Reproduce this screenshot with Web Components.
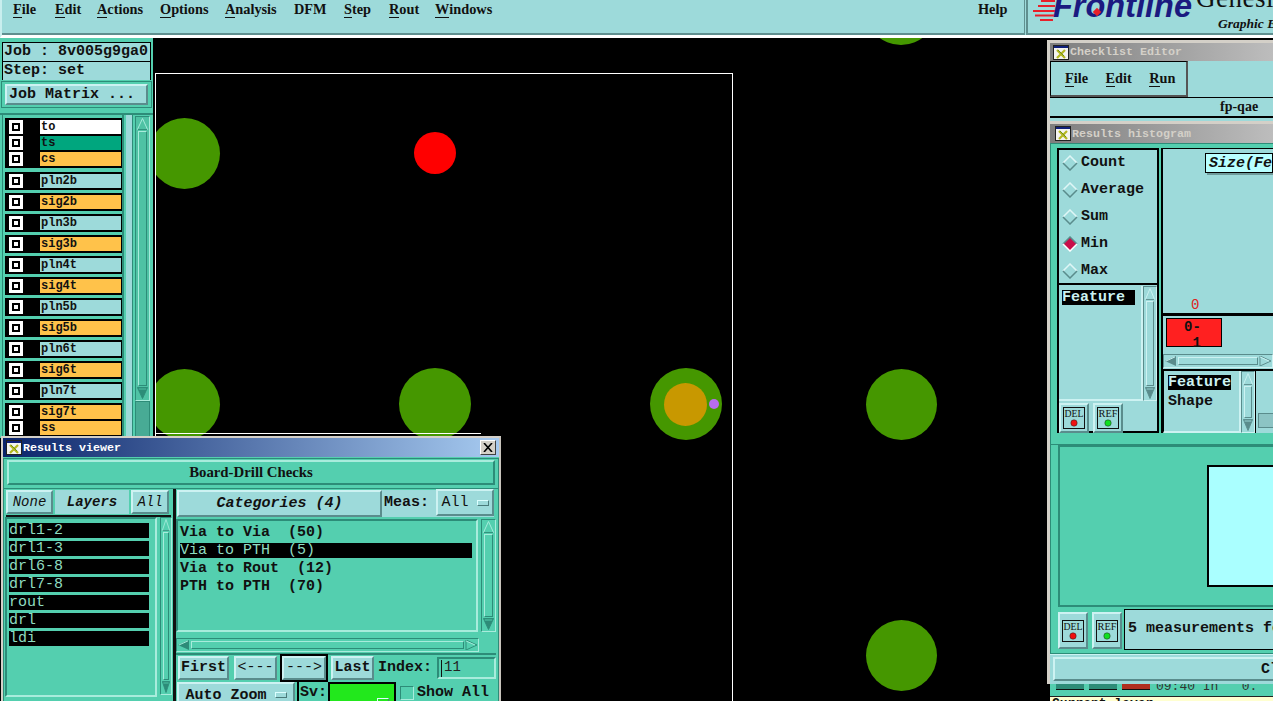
<!DOCTYPE html>
<html><head><meta charset="utf-8"><title>Genesis</title>
<style>
html,body{margin:0;padding:0;background:#000;overflow:hidden;width:1273px;height:701px}
</style></head>
<body>
<genesis-desktop>
  <app-header slot="header"></app-header>
  <left-panel slot="left"></left-panel>
  <pcb-canvas slot="canvas"></pcb-canvas>
  <results-viewer slot="win"></results-viewer>
  <checklist-editor slot="win"></checklist-editor>
  <results-histogram slot="win"></results-histogram>
  <status-strip slot="win"></status-strip>
</genesis-desktop>
<script>
const BASE=`*,:host{box-sizing:border-box}`;
const MONO=`"Liberation Mono","DejaVu Sans Mono",monospace`;
const SERIF=`"Liberation Serif",serif`;
const def=(tag,css,html)=>customElements.define(tag,class extends HTMLElement{
  connectedCallback(){
    if(this.shadowRoot)return;
    const r=this.attachShadow({mode:'open'});
    const a=n=>this.getAttribute(n)||'';
    r.innerHTML=`<style>${BASE}${css}</style>`+(typeof html==='function'?html(a,this):html);
  }
});

def('genesis-desktop',`
:host{display:flex;flex-direction:column;position:relative;width:1273px;height:701px;background:#000;overflow:hidden}
.main{flex:1;display:flex;min-height:0}
`,`<slot name="header"></slot><div class="main"><slot name="left"></slot><slot name="canvas"></slot></div><slot name="win"></slot>`);

def('app-header',`
:host{display:flex;height:38px;flex:none;background:#9ddada;border-left:2px solid #c9eeee;border-bottom:3px solid #fff;box-shadow:inset 0 -2px 0 #5f8f8f;position:relative;overflow:hidden;color:#111;font:bold 14.3px ${SERIF}}
.menu{flex:0 0 1022px;height:30px}
.menu span{position:absolute;top:1px}
u{text-decoration:none;border-bottom:1px solid #111;display:inline-block;line-height:15px}
.sep{width:4px;background:#9ddada;border-left:1px solid #5f8f8f;border-right:2px solid #5f8f8f;height:35px}
.logo{flex:1;position:relative;height:35px}
.streak{position:absolute;left:4px;top:0}
.fl{position:absolute;left:25px;top:-12px;font:italic bold 32.5px "Liberation Sans",sans-serif;color:#1b1a80}
.dot{position:absolute;left:66px;top:9px;width:6px;height:6px;background:#e8202a;transform:rotate(45deg)}
.gen{position:absolute;left:168px;top:-17px;font:normal 27px ${SERIF};letter-spacing:.5px;color:#111}
.gr{position:absolute;left:190px;top:16px;font:italic bold 13.5px ${SERIF};white-space:nowrap}
`,`<div class="menu">
<span style="left:11px"><u>F</u>ile</span><span style="left:53px"><u>E</u>dit</span><span style="left:95px"><u>A</u>ctions</span><span style="left:158px"><u>O</u>ptions</span><span style="left:223px"><u>A</u>nalysis</span><span style="left:292px">DFM</span><span style="left:342px"><u>S</u>tep</span><span style="left:387px"><u>R</u>out</span><span style="left:433px"><u>W</u>indows</span><span style="left:976px">Help</span>
</div><div class="sep"></div><div class="logo">
<svg class="streak" width="24" height="24" viewBox="0 0 24 24"><g stroke="#e8202a" stroke-width="2"><path d="M9 1H23M6 6H23M1 11H23M3 15.500H23M8 20H21"/></g></svg>
<span class="fl">Frontline</span><i class="dot"></i>
<span class="gen">Genesis</span><span class="gr">Graphic E</span></div>`);

def('bevel-btn',`
:host{display:flex;align-items:center;justify-content:center;background:var(--bg,#9ddada);border:2px solid;border-color:var(--li,#cdf2f2) var(--dk,#5a8c8c) var(--dk,#5a8c8c) var(--li,#cdf2f2);color:#111;font:bold 15px ${MONO};white-space:pre;overflow:hidden}
:host([ital]){font-style:italic}
:host([sel]){outline:2px solid #000;outline-offset:0}
:host([left]){justify-content:flex-start;padding-left:8px}
`,`<slot></slot>`);

def('drop-mark',`:host{display:inline-block;width:12px;height:6px;background:var(--bg,#9ddada);border:1px solid;border-color:#dff #4a7a7a #4a7a7a #dff;margin-left:8px}`,``);

def('scroll-bar',`
:host{display:flex;flex-direction:column;background:var(--bg,#54cfaf);border:1px solid var(--dk,#2d8c78);border-right-color:var(--li,#a8ecdc);border-bottom-color:var(--li,#a8ecdc);padding:1px;overflow:hidden;flex:none}
:host([h]){flex-direction:row}
svg{flex:none;display:block}
.t{flex:1;border:1px solid;border-color:var(--li,#a8ecdc) var(--dk,#2d8c78) var(--dk,#2d8c78) var(--li,#a8ecdc);margin:1px}
`,(a,el)=>el.hasAttribute('h')?`<svg width="12" height="100%" viewBox="0 0 12 11" preserveAspectRatio="none"><path d="M0 5.500 11 0V11Z" fill="var(--dk,#2d8c78)"/><path d="M1 5.500 10 1" stroke="var(--li,#a8ecdc)" fill="none"/></svg><div class="t"></div><svg width="12" height="100%" viewBox="0 0 12 11" preserveAspectRatio="none"><path d="M12 5.500 1 0V11Z" fill="var(--bg,#54cfaf)" stroke="var(--dk,#2d8c78)"/><path d="M1 1 10 5.500" stroke="var(--li,#a8ecdc)"/></svg>`
:`<svg width="100%" height="12" viewBox="0 0 12 12" preserveAspectRatio="none"><path d="M6 .5 11.500 11.500H.5Z" fill="var(--bg,#54cfaf)" stroke="var(--li,#a8ecdc)"/><path d="M1 11.500H11" stroke="var(--dk,#2d8c78)"/></svg><div class="t"></div><svg width="100%" height="12" viewBox="0 0 12 12" preserveAspectRatio="none"><path d="M6 11.500 11.500 .5H.5Z" fill="var(--dk,#2d8c78)" stroke="var(--dk,#2d8c78)"/><path d="M2 2H10" stroke="var(--bg,#54cfaf)"/></svg>`);

def('layer-row',`
:host{display:flex;height:14px;align-items:center;--c:#9ddada;background:#000}
:host([c=w]){--c:#fff}:host([c=g]){--c:#00a67e}:host([c=o]){--c:#ffc24a}
.cb{width:14px;height:14px;background:#fff;margin-left:3px;padding:3px}
.cb i{display:block;width:8px;height:8px;background:#000;padding:2px}
.cb i b{display:block;width:4px;height:4px;background:#fff}
.l{margin-left:17px;width:81px;height:14px;background:var(--c);font:bold 12px/14px ${MONO};color:#111;padding-left:1px;white-space:pre}
`,a=>`<div class="cb"><i><b></b></i></div><div class="l">${a('name')}</div>`);

def('layer-group',`:host{display:flex;flex-direction:column;gap:2px;background:#000;padding:2px 1px;margin-bottom:3px;margin-left:1px;width:117px}
:host([first]){margin-bottom:4px}`,`<slot></slot>`);

def('left-panel',`
:host{display:flex;flex-direction:column;width:153px;flex:none;height:400px;background:#54cfaf;overflow:hidden;color:#111;font:bold 15px ${MONO}}
.info{margin:4px 2px 0 2px;border:1px solid #000;background:#000;display:flex;flex-direction:column;gap:1px;height:38px;flex:none}
.info div{background:#9ddada;height:18px;line-height:18px;padding-left:1px;white-space:pre;flex:1}
.jm{margin:1px 1px 0 1px;height:27px;flex:none;border:1px solid #2d8c78;padding:2px 3px;background:#54cfaf}
.jm bevel-btn{height:21px;width:100%}
.body{flex:1;margin-top:5px;border-top:2px solid #2d8c78;display:flex;min-height:0;padding-left:2px}
.list{width:122px;padding:3px 0 0 1px;border-left:1px solid #2d8c78;border-right:2px solid #2d8c78;flex:none;margin-right:2px}
.strip{width:7px;background:#9ddada;border-right:1px solid #2d8c78;flex:none;margin-right:2px}
scroll-bar{width:15px;--bg:#4fc2a4}
.sh{flex:none;margin-top:1px;height:285px;width:100%}
.tail{flex:1;background:#48ab95;border:1px solid #2d8c78}
.sc{display:flex;flex-direction:column;width:15px}
`,`<div class="info"><div>Job : 8v005g9ga0</div><div>Step: set</div></div>
<div class="jm"><bevel-btn left style="padding-left:2px">Job Matrix ...</bevel-btn></div>
<div class="body"><div class="list">
<layer-group first><layer-row name="to" c="w"></layer-row><layer-row name="ts" c="g"></layer-row><layer-row name="cs" c="o"></layer-row></layer-group>
<layer-group><layer-row name="pln2b"></layer-row></layer-group>
<layer-group><layer-row name="sig2b" c="o"></layer-row></layer-group>
<layer-group><layer-row name="pln3b"></layer-row></layer-group>
<layer-group><layer-row name="sig3b" c="o"></layer-row></layer-group>
<layer-group><layer-row name="pln4t"></layer-row></layer-group>
<layer-group><layer-row name="sig4t" c="o"></layer-row></layer-group>
<layer-group><layer-row name="pln5b"></layer-row></layer-group>
<layer-group><layer-row name="sig5b" c="o"></layer-row></layer-group>
<layer-group><layer-row name="pln6t"></layer-row></layer-group>
<layer-group><layer-row name="sig6t" c="o"></layer-row></layer-group>
<layer-group><layer-row name="pln7t"></layer-row></layer-group>
<layer-group><layer-row name="sig7t" c="o"></layer-row><layer-row name="ss" c="o"></layer-row></layer-group>
</div><div class="strip"></div><div class="sc"><scroll-bar class="sh"></scroll-bar><div class="tail"></div></div></div>`);

def('pcb-pad',`:host{position:absolute;border-radius:50%;display:block}`,``);

def('pcb-canvas',`
:host{display:block;flex:1;position:relative;background:#000;overflow:hidden}
.board{position:absolute;left:2px;top:35px;width:578px;height:700px;border:1px solid #fff;border-bottom:0}
.ln{position:absolute;left:2px;top:395px;width:326px;height:1px;background:#fff}
.clip{position:absolute;left:3px;top:0;right:0;bottom:0;overflow:hidden}
`,()=>{
 const P=(x,y,r,c)=>`<pcb-pad style="left:${x-r-156}px;top:${y-r-38}px;width:${2*r}px;height:${2*r}px;background:${c}"></pcb-pad>`;
 const G='#459700';
 return `<div class="clip">`+P(184,153,35.5,G)+P(435,153,21,'#ff0000')+P(901,9,36,G)+P(184,404,35.5,G)+P(435,404,36,G)+P(685.500,404,36,G)+P(685.500,404,21.5,'#c89800')+P(714,404,5,'#b76cf0')+P(901,404.500,35.5,G)+P(901,655.500,35.5,G)+`</div><div class="board"></div><div class="ln"></div>`;
});

def('title-bar',`
:host{display:flex;align-items:center;height:19px;background:var(--tb,linear-gradient(90deg,#0a246a,#a6caf0));color:var(--tc,#fff);font:bold 11.67px ${MONO};position:relative;padding-left:3px;white-space:pre;flex:none}
svg{flex:none;margin-right:1px}
::slotted(*){margin-left:auto}
`,a=>`<svg width="16" height="15" viewBox="0 0 16 15"><rect x=".5" y=".5" width="15" height="14" fill="#f4f4f0" stroke="#222"/><rect x="1" y="1" width="14" height="2" fill="#10207a"/><path d="M4 5 12 13M12 5 4 13" stroke="#b4b820" stroke-width="2.200"/><path d="M5 5 11 11" stroke="#70901a"/></svg>${a('label')}<slot></slot>`);

def('close-x',`:host{display:flex;width:16px;height:15px;background:#d4d0c8;border:1px solid;border-color:#fff #404040 #404040 #fff;margin-right:3px;align-items:center;justify-content:center}`,`<svg width="10" height="9" viewBox="0 0 10 9"><path d="M1 0 9 9M9 0 1 9" stroke="#000" stroke-width="1.600"/></svg>`);

def('results-viewer',`
:host{position:absolute;left:1px;top:436px;width:500px;height:265px;background:#54cfaf;border:2px solid #d4d0c8;border-bottom:0;border-right-color:#c8c4bc;display:flex;flex-direction:column;color:#111;font:bold 15px ${MONO};--bg:#54cfaf;--li:#a8ecdc;--dk:#2d8c78;overflow:hidden}
.frame{flex:1;border:1px solid #2d8c78;border-bottom:0;margin:1px 0 0 0;display:flex;flex-direction:column;min-height:0}
.top{padding:1px 3px 3px 3px;flex:none}
.top bevel-btn{height:25px;font:bold 14.800px ${SERIF}}
.row{flex:1;display:grid;grid-template-columns:169px 1fr;min-height:0;border-top:1px solid #2d8c78}
.lp{display:flex;flex-direction:column;padding:1px 0 0 1px;min-height:0}
.hd{display:grid;grid-template-columns:47px 74px 38px;gap:2px;height:27px;align-items:stretch;border-bottom:2px solid #111;padding-bottom:1px;width:165px;flex:none;margin-left:1px}
.hd bevel-btn{font-weight:normal;font-size:14px}
.hd .c{--bg:#9ddada;--li:#9ddada;--dk:#9ddada;font-weight:bold}
.lists{flex:1;display:flex;min-height:0;gap:3px}
.ll{flex:0 0 152px;padding:4px 0 0 2px;border:2px solid;border-color:#2d8c78 #a8ecdc #a8ecdc #2d8c78;display:flex;flex-direction:column;gap:3px;height:180px}
.ll div{width:140px;height:15px;background:#000;color:#8fdcc0;font:normal 15px/15px ${MONO}}
.lists scroll-bar{width:12px;height:178px}
.rp{border-left:3px solid #111;display:flex;flex-direction:column;min-height:0;padding-right:4px}
.h2{display:flex;height:30px;padding:1px 2px 0 1px;align-items:stretch;flex:none;background:#54cfaf}
.cat{width:205px;--bg:#9ddada;--li:#cdf2f2;--dk:#5a8c8c;font:italic bold 15px ${MONO};height:27px}
.meas{background:#9ddada;display:flex;flex:1;align-items:center;padding:0 0 2px 2px;height:27px;white-space:pre}
.allb{width:58px;margin-left:auto;height:27px;--bg:#9ddada;--li:#cdf2f2;--dk:#5a8c8c;font-weight:normal}
.mid{height:113px;display:flex;flex:none}
.cats{flex:1;border:2px solid;border-color:#2d8c78 #a8ecdc #a8ecdc #2d8c78;padding:3px 4px 0 2px;font:bold 15px/18px ${MONO};white-space:pre}
.cats div{height:18px}
.cats .s{background:#000;color:#8fdcc0;height:15px;line-height:15px;margin:1px 0 2px;font-weight:normal}
.mid scroll-bar{width:15px;height:113px;margin-left:3px}
.hs{margin-top:6px;height:14px;width:303px;flex:none}
.btns{display:flex;align-items:center;gap:4px;height:27px;padding:1px 0 1px 1px;flex:none;border-top:2px solid #2d8c78;margin-top:1px}
.btns bevel-btn{height:24px;--bg:#9ddada;--li:#cdf2f2;--dk:#5a8c8c}
.idx{white-space:pre}
.inp{width:59px;height:22px;border:2px solid;border-color:#2d8c78 #a8ecdc #a8ecdc #2d8c78;font:normal 14px/16px ${MONO};padding-left:5px;color:#222;margin-left:1px;position:relative}
.inp i{position:absolute;left:2px;top:1px;width:1px;height:17px;background:#111}
.last{display:flex;align-items:flex-start;height:30px;padding-top:2px;flex:none}
.az{width:118px;height:26px;margin-left:1px;--bg:#9ddada;--li:#cdf2f2;--dk:#5a8c8c}
.sv{margin-left:2px;border-left:2px solid #000;padding-left:1px;height:22px;white-space:pre;line-height:22px}
.gr{width:68px;height:24px;background:#22e81c;border:2px solid #000;border-bottom:0;margin-left:1px;display:flex;align-items:flex-end;justify-content:flex-end;padding:0 5px 2px}
.ck{width:14px;height:14px;border:1px solid #2d8c78;margin:4px 3px 0 4px;border-right-color:#a8ecdc;border-bottom-color:#a8ecdc}
.sa{line-height:22px;white-space:pre}
`,`<title-bar label="Results viewer"><close-x></close-x></title-bar>
<div class="frame">
<div class="top"><bevel-btn>Board-Drill Checks</bevel-btn></div>
<div class="row">
<div class="lp">
  <div class="hd"><bevel-btn ital style="--bg:#9ddada;--li:#cdf2f2;--dk:#5a8c8c">None</bevel-btn><bevel-btn class="c" ital>Layers</bevel-btn><bevel-btn ital style="--bg:#9ddada;--li:#cdf2f2;--dk:#5a8c8c">All</bevel-btn></div>
  <div class="lists"><div class="ll"><div>drl1-2</div><div>drl1-3</div><div>drl6-8</div><div>drl7-8</div><div>rout</div><div>drl</div><div>ldi</div></div><scroll-bar></scroll-bar></div>
</div>
<div class="rp">
  <div class="h2"><bevel-btn class="cat">Categories (4)</bevel-btn><div class="meas">Meas:<bevel-btn class="allb">All<drop-mark></drop-mark></bevel-btn></div></div>
  <div class="mid"><div class="cats"><div>Via to Via  (50)</div><div class="s">Via to PTH  (5)</div><div>Via to Rout  (12)</div><div>PTH to PTH  (70)</div></div><scroll-bar></scroll-bar></div>
  <scroll-bar class="hs" h=""></scroll-bar>
  <div class="btns"><bevel-btn style="width:51px;margin-right:1px;margin-left:1px">First</bevel-btn><bevel-btn style="width:43px;font-weight:normal">&lt;---</bevel-btn><bevel-btn sel style="width:44px;margin-left:1px;font-weight:normal">---&gt;</bevel-btn><bevel-btn style="width:43px;margin-left:1px">Last</bevel-btn><span class="idx">Index:</span><div class="inp"><i></i>11</div></div>
  <div class="last"><bevel-btn class="az">Auto Zoom<drop-mark></drop-mark></bevel-btn><span class="sv">Sv:</span><div class="gr"><drop-mark style="--bg:#22e81c"></drop-mark></div><div class="ck"></div><span class="sa">Show All</span></div>
</div>
</div></div>`);

def('checklist-editor',`
:host{position:absolute;left:1047px;top:40px;width:226px;height:81px;background:#9ddada;border:3px solid #d4d0c8;border-right:0;border-bottom:0;display:flex;flex-direction:column;color:#111;--tb:linear-gradient(90deg,#7e7e7e,#bdbdbd);--tc:#d4d0c8;overflow:hidden}
title-bar{height:18px}
.m{height:36px;width:138px;background:#9ddada;border:2px solid;border-color:#000 #555 #555 #000;border-top-width:1px;border-left-width:1px;display:flex;gap:17.500px;padding:8px 0 0 14px;font:bold 14.300px ${SERIF};flex:none}
u{text-decoration:none;border-bottom:1px solid #111;display:inline-block;line-height:15px}
.n{height:21px;border-top:1px solid #000;border-bottom:2px solid #000;font:bold 14px/18px ${SERIF};padding-left:170px}
`,`<title-bar label="Checklist Editor"></title-bar><div class="m"><span><u>F</u>ile</span><span><u>E</u>dit</span><span><u>R</u>un</span></div><div class="n">fp-qae</div>`);

def('mini-rb',`:host{display:flex;width:30px;height:30px;background:#9ddada;border:2px solid;border-color:#cdf2f2 #5a8c8c #5a8c8c #cdf2f2;align-items:center;justify-content:center;flex:none}
text{font:normal 10.5px ${SERIF};fill:#111}`,a=>`<svg width="22" height="22" viewBox="0 0 22 22"><rect x=".5" y=".5" width="21" height="21" fill="none" stroke="#111"/><circle cx="11" cy="16" r="3.200" fill="${a('c')}" stroke="#222" stroke-width=".5"/><text x="11" y="10" text-anchor="middle" textLength="19" lengthAdjust="spacingAndGlyphs">${a('t')}</text></svg>`);

def('radio-item',`
:host{display:flex;align-items:center;height:27px;padding-left:3px;font:bold 15px ${MONO};color:#111;gap:3px}
svg{flex:none}
`,a=>`<svg width="16" height="16" viewBox="0 0 16 16"><path d="M8 1 15 8 8 15 1 8Z" fill="${a('on')?'#c8104a':'#9ddada'}"/><path d="M1 8 8 1 15 8" fill="none" stroke="${a('on')?'#5a8c8c':'#dff6f6'}" stroke-width="1.500"/><path d="M1 8 8 15 15 8" fill="none" stroke="${a('on')?'#fff':'#5a8c8c'}" stroke-width="1.500"/></svg>${a('label')}`);

def('results-histogram',`
:host{position:absolute;left:1047px;top:121px;width:226px;height:563px;background:#d4d0c8;border-left:3px solid #d4d0c8;border-top:3px solid #d4d0c8;display:flex;flex-direction:column;color:#111;--tb:linear-gradient(90deg,#7e7e7e,#bdbdbd);--tc:#d4d0c8;--bg:#9ddada;--li:#cdf2f2;--dk:#5a8c8c;overflow:hidden;font:bold 15px ${MONO}}
title-bar{height:19px;padding-left:5px}
.a{height:302px;background:#54cfaf;border:1px solid #2d8c78;border-right:0;padding:4px 0 0 6px;display:flex;flex:none;overflow:hidden}
.l{width:102px;border:2px solid #000;background:#9ddada;flex:none;height:285px;display:flex;flex-direction:column}
.rad{height:136px;border-bottom:2px solid #000;margin-top:-1px}
.lb{display:flex;height:115px;flex:none;margin-top:1px}
.ll{flex:1;padding:4px 0 0 3px;border-right:2px solid #cdf2f2;border-bottom:2px solid #cdf2f2}
.ll span{display:block;background:#000;color:#cdf2f2;width:73px;line-height:15px;height:15px;font-weight:bold}
.lb scroll-bar{width:14px}
.bb{display:flex;padding:2px 0 0 0;gap:4px}
.r{flex:1;margin-left:2px;background:#9ddada;min-width:0;height:285px;display:flex;flex-direction:column;border:2px solid #000;border-right:0;border-bottom:0;border-top-width:1px;overflow:hidden}
.ch{height:164px;flex:none;padding:4px 0 0 42px;position:relative}
.sz{height:20px;background:#b8ffff;border:1px solid #000;box-shadow:2px 2px 0 #6e9b9b;font:italic bold 15px/20px ${MONO};padding-left:3px}
.zero{position:absolute;left:28px;bottom:0;color:#e02020;font:normal 14px ${MONO}}
.ax{height:3px;background:#000;flex:none}
.bar{width:56px;height:29px;background:#ff2020;border:1px solid #000;margin:2px 0 0 3px;text-align:center;font:bold 14px/16px ${MONO};flex:none;padding-right:3px;overflow:visible}
.sc{height:14px;margin-top:7px;flex:none}
.low{flex:1;display:flex;border-top:2px solid #000;min-height:0;margin-top:1px}
.f{width:78px;padding:4px 0 0 4px;font:bold 15px/18px ${MONO};border-right:2px solid #cdf2f2;border-bottom:2px solid #cdf2f2;border-left:1px solid #000;flex:none}
.f span{display:block;background:#000;color:#cdf2f2;width:63px;height:15px;line-height:15px;margin-bottom:3px}
.low scroll-bar{width:14px}
.th{flex:1;border-left:1px solid #000;padding:42px 0 0 2px}
.th i{display:block;height:15px;background:#8cc4c4;border:1px solid #5a8c8c;border-right:0}
.bt{height:162px;background:#54cfaf;border-left:1px solid #2d8c78;padding:0 0 0 7px;flex:none}
.cv{height:162px;border:2px solid #2d8c78;border-right:0;padding:18px 0 0 147px;background:#54cfaf}
.cv div{height:122px;background:#aaffff;border:2px solid #000;border-right:0}
.msg{height:47px;background:#54cfaf;display:flex;padding:2px 0 0 7px;flex:none;border-left:1px solid #2d8c78;border-bottom:1px solid #2d8c78}
.msg mini-rb{width:30px;height:37px;margin:3px 4px 0 0}
.mt{flex:1;background:#9ddada;border:1px solid #000;border-right:0;height:41px;padding-left:3px;line-height:38px;white-space:pre;overflow:hidden;margin-left:-2px}
.cl{flex:1;background:#9ddada;padding:2px 1px 0 3px;border-top:1px solid #cdf2f2;overflow:hidden;min-height:0}
.cl bevel-btn{height:24px;justify-content:flex-start;padding-left:206px;width:calc(100% + 40px)}
`,`<title-bar label="Results histogram"></title-bar>
<div class="a"><div class="l"><div class="rad"><radio-item label="Count"></radio-item><radio-item label="Average"></radio-item><radio-item label="Sum"></radio-item><radio-item label="Min" on="1"></radio-item><radio-item label="Max"></radio-item></div>
<div class="lb"><div class="ll"><span>Feature</span></div><scroll-bar></scroll-bar></div>
<div class="bb"><mini-rb t="DEL" c="#f01010"></mini-rb><mini-rb t="REF" c="#10e020"></mini-rb></div></div>
<div class="r"><div class="ch"><div class="sz">Size(Fe</div><div class="zero">0</div></div><div class="ax"></div><div class="bar">0-<br>&nbsp;1</div><scroll-bar class="sc" h=""></scroll-bar>
<div class="low"><div class="f"><span>Feature</span>Shape</div><scroll-bar></scroll-bar><div class="th"><i></i></div></div></div></div>
<div class="bt"><div class="cv"><div></div></div></div>
<div class="msg"><mini-rb t="DEL" c="#f01010"></mini-rb><mini-rb t="REF" c="#10e020"></mini-rb><div class="mt">5 measurements fo</div></div>
<div class="cl"><bevel-btn>Close</bevel-btn></div>`);

def('status-strip',`
:host{position:absolute;left:1050px;top:684px;width:223px;height:17px;background:#54cfaf;overflow:hidden;display:flex;flex-direction:column;font:bold 13px ${MONO};color:#111}
.a{height:12px;line-height:5px;padding-left:6px;white-space:pre;font-weight:normal;color:#333;display:flex;gap:5px;flex:none}
.a i{width:28px;height:6px;background:#2d8c78;border-bottom:1px solid #111;display:block}
.a i.r{background:#b03020}
.a span{margin-left:1px}
.b{background:#ffffd0;flex:1;padding-left:2px;line-height:14px;white-space:pre;border-top:1px solid #222}
`,`<div class="a"><i></i><i></i><i class="r"></i><span>09:40 In   0.</span></div><div class="b">Current layer</div>`);
</script>
</body></html>
